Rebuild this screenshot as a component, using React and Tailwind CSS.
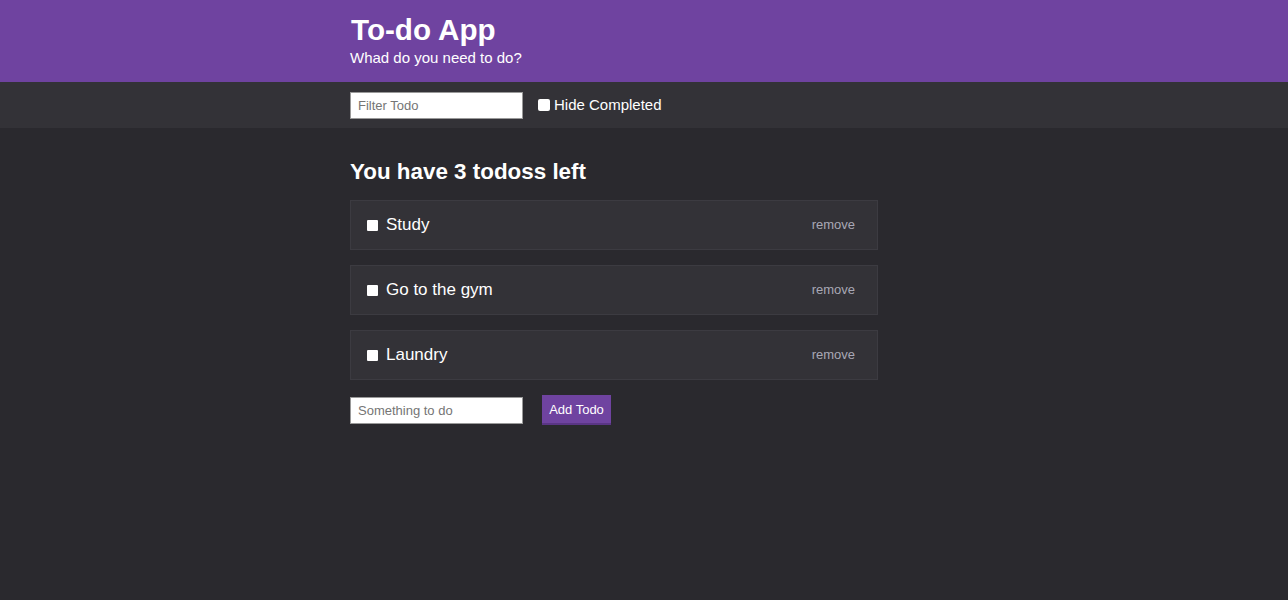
import React from "react";

const todos = ["Study", "Go to the gym", "Laundry"];

export default function App() {
  return (
    <div className="min-h-screen bg-[#2a292e] text-white" style={{ fontFamily: '"Liberation Sans", Arial, sans-serif' }}>
      <header className="h-[82px] bg-[#6f43a0]">
        <div className="mx-auto w-[588px] pt-[12px]">
          <h1 className="pl-px text-[29.6px] font-bold leading-[36px]">To-do App</h1>
          <p className="text-[15px] leading-[20px]">Whad do you need to do?</p>
        </div>
      </header>
      <div className="h-[46px] bg-[#333237]">
        <div className="mx-auto flex h-full w-[588px] items-center">
          <input
            placeholder="Filter Todo"
            className="h-[27px] w-[173px] border border-[#999] bg-white px-[7px] text-[13px] text-black placeholder:text-[#757575] outline-none"
          />
          <label className="ml-[15px] flex items-center text-[15px]">
            <input type="checkbox" className="m-0 mr-[4px] h-[12px] w-[12px] appearance-none rounded-[2px] bg-white" />
            Hide Completed
          </label>
        </div>
      </div>
      <main className="mx-auto w-[588px] pt-[30px]">
        <div className="w-[528px]">
          <h2 className="text-[22.4px] font-bold leading-[28px]">You have 3 todoss left</h2>
          <div className="mt-[14px] flex flex-col gap-[15px]">
            {todos.map((t) => (
              <div key={t} className="flex h-[50px] items-center justify-between border border-[#3c3b41] bg-[#333237] pl-[16px] pr-[22px]">
                <label className="flex items-center text-[17px]">
                  <input type="checkbox" className="m-0 mr-[8px] h-[11px] w-[11px] appearance-none rounded-[1px] bg-white" />
                  {t}
                </label>
                <button className="text-[13px] text-[#a8a8b5]">remove</button>
              </div>
            ))}
          </div>
          <form className="mt-[15px] flex items-center" onSubmit={(e) => e.preventDefault()}>
            <input
              placeholder="Something to do"
              className="h-[27px] w-[173px] border border-[#999] bg-white px-[7px] text-[13px] text-black placeholder:text-[#757575] outline-none"
            />
            <button className="ml-[19px] h-[30px] w-[69px] border-b-2 border-[#5a3585] bg-[#6f43a0] pt-[2px] text-[13px] text-white">
              Add Todo
            </button>
          </form>
        </div>
      </main>
    </div>
  );
}
